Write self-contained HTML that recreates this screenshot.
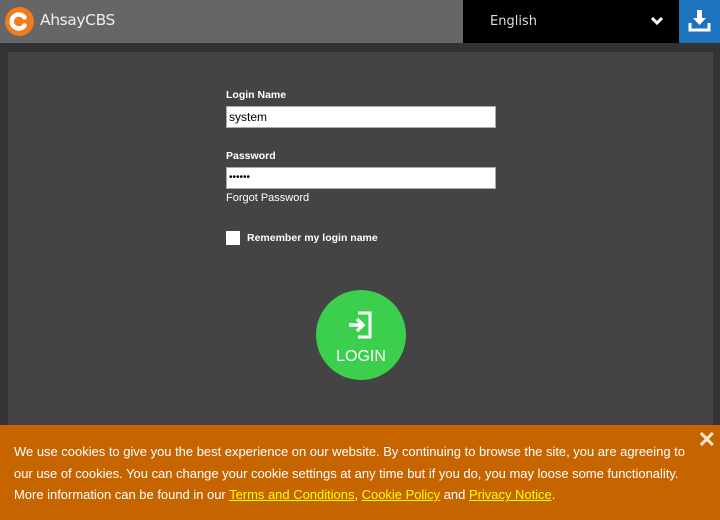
<!DOCTYPE html>
<html><head><meta charset="utf-8"><style>
*{margin:0;padding:0;box-sizing:border-box}
body{width:720px;height:520px;background:#333;font-family:"Liberation Sans",Arial,sans-serif;position:relative;overflow:hidden}
.hdr{position:absolute;left:0;top:0;width:720px;height:43px;background:#666}
.logo{position:absolute;left:5px;top:7px;width:29px;height:29px;border-radius:50%;background:#f07c1e}
.brand{position:absolute;left:40px;top:11px;font-family:"DejaVu Sans",sans-serif;font-size:15.5px;color:#eee;letter-spacing:-0.4px}
.lang{position:absolute;left:463px;top:0;width:216px;height:43px;background:#000}
.lang span{position:absolute;left:27px;top:14px;font-family:"DejaVu Sans",sans-serif;font-size:13px;color:#ddd}
.dl{position:absolute;left:679px;top:0;width:41px;height:43px;background:#1e73be}
.panel{position:absolute;left:8px;top:52px;width:705px;height:400px;background:#444}
.lbl{position:absolute;left:226px;font-size:10.5px;font-weight:bold;color:#fff;white-space:nowrap}
.inp{position:absolute;left:226px;width:270px;height:22px;background:#fff;border:1px solid #aaa;font-size:12px;padding:3px 2px;color:#000}
.cb{position:absolute;left:226px;top:231px;width:14px;height:14px;background:#fff}
.btn{position:absolute;left:316px;top:290px;width:90px;height:90px;border-radius:50%;background:#3ccf4e}
.btn span{position:absolute;left:0;width:90px;text-align:center;top:58px;color:#fff;font-size:16px}
.ck{position:absolute;left:0;top:425px;width:720px;height:95px;background:#c66400;color:#fff;font-size:13px;line-height:21.7px;padding:16px 0 0 14px;white-space:nowrap;letter-spacing:-0.02px}
.ck a{color:#ff0;text-decoration:underline}
.x{position:absolute;right:4px;top:427px;font-size:22px;color:#fde7d0;font-weight:bold}
</style></head><body>
<div class="hdr">
 <div class="logo"><svg width="29" height="29" viewBox="0 0 29 29"><path d="M19.5 10.5A7 7 0 1 0 19.5 18.5" fill="none" stroke="#fff" stroke-width="4.5" stroke-linecap="round"/></svg></div>
 <div class="brand">AhsayCBS</div>
 <div class="lang"><span>English</span>
  <svg style="position:absolute;left:187px;top:15px" width="14" height="12" viewBox="0 0 14 12"><path d="M2 3L7 8L12 3" fill="none" stroke="#fff" stroke-width="3"/></svg></div>
 <div class="dl"><svg width="41" height="43" viewBox="0 0 41 43"><path d="M18 10h5v8h4l-6.5 7l-6.5-7h4z" fill="#fff"/><path d="M11 23v7h19v-7" fill="none" stroke="#fff" stroke-width="3"/></svg></div>
</div>
<div class="panel"></div>
<div class="lbl" style="top:89px">Login Name</div>
<div class="inp" style="top:106px">system</div>
<div class="lbl" style="top:150px">Password</div>
<div class="inp" style="top:167px;font-size:10px;padding-top:4px">••••••</div>
<div class="lbl" style="top:192px;font-weight:normal;font-size:11px">Forgot Password</div>
<div class="cb"></div>
<div class="lbl" style="left:247px;top:232px">Remember my login name</div>
<div class="btn"><svg style="position:absolute;left:30px;top:20px" width="30" height="30" viewBox="0 0 30 30"><path d="M12 3h12v24h-12" fill="none" stroke="#fff" stroke-width="3"/><path d="M3 15h13" stroke="#fff" stroke-width="3.5"/><path d="M11 9l6 6l-6 6" fill="none" stroke="#fff" stroke-width="3.5"/></svg><span>LOGIN</span></div>
<div class="ck">We use cookies to give you the best experience on our website. By continuing to browse the site, you are agreeing to<br>our use of cookies. You can change your cookie settings at any time but if you do, you may loose some functionality.<br>More information can be found in our <a>Terms and Conditions</a>, <a>Cookie Policy</a> and <a>Privacy Notice</a>.</div>
<div class="x">✕</div>
</body></html>
